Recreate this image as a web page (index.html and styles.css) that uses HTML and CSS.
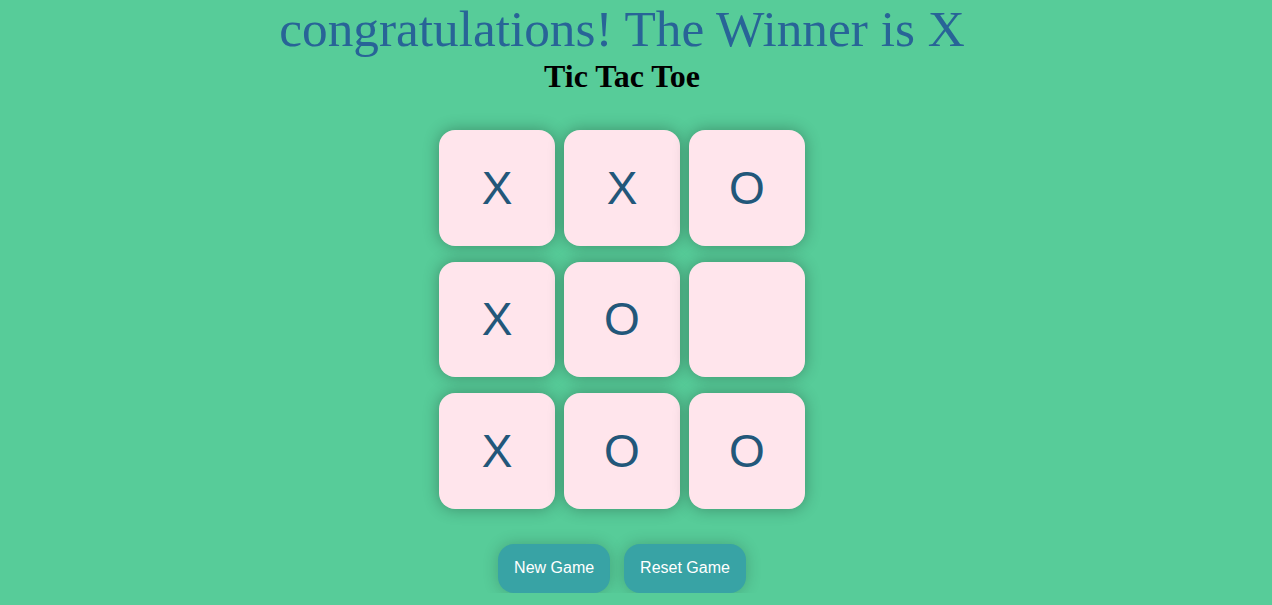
FILE: index.html
```html
<!DOCTYPE html>
<html>
<head>
<meta charset="utf-8">
<link rel="stylesheet" href="styles.css">
</head>
<body>
<main class="page">
  <p class="msg">congratulations! The Winner is X</p>
  <h1 class="title">Tic Tac Toe</h1>
  <div class="game">
    <button class="box">X</button>
    <button class="box">X</button>
    <button class="box">O</button>
    <button class="box">X</button>
    <button class="box">O</button>
    <button class="box"></button>
    <button class="box">X</button>
    <button class="box">O</button>
    <button class="box">O</button>
  </div>
  <div class="actions">
    <button class="btn">New Game</button>
    <button class="btn">Reset Game</button>
  </div>
</main>
</body>
</html>
```
FILE: styles.css
```css
html {
  overflow: hidden;
  background: #57cc99;
}
body {
  margin: 0;
  padding: 0;
  background: #57cc99;
}
.page {
  width: 1244px;
  display: flex;
  flex-direction: column;
  align-items: center;
}
.msg {
  margin: 0;
  font-family: "Liberation Serif", "Times New Roman", serif;
  font-size: 51.3px;
  line-height: 58px;
  color: #286497;
}
.title {
  margin: 0;
  font-family: "Liberation Serif", "Times New Roman", serif;
  font-size: 32px;
  font-weight: bold;
  color: #000;
}
.game {
  margin-top: 35px;
  display: grid;
  grid-template-columns: repeat(3, 116px);
  grid-auto-rows: 115.5px;
  column-gap: 9px;
  row-gap: 16px;
}
.box {
  border: none;
  border-radius: 16px;
  background: #ffe5ec;
  box-shadow: 0 0 16px rgba(0, 0, 0, 0.3);
  font-family: "Liberation Sans", Arial, sans-serif;
  font-size: 46px;
  color: #22577a;
  padding: 0;
}
.actions {
  margin-top: 35px;
  display: flex;
  gap: 14px;
}
.btn {
  border: none;
  border-radius: 16px;
  background: #38a3a5;
  color: #fff;
  font-family: "Liberation Sans", Arial, sans-serif;
  font-size: 16px;
  padding: 15.5px 16px;
  box-shadow: 0 0 16px rgba(0, 0, 0, 0.2);
}
```
